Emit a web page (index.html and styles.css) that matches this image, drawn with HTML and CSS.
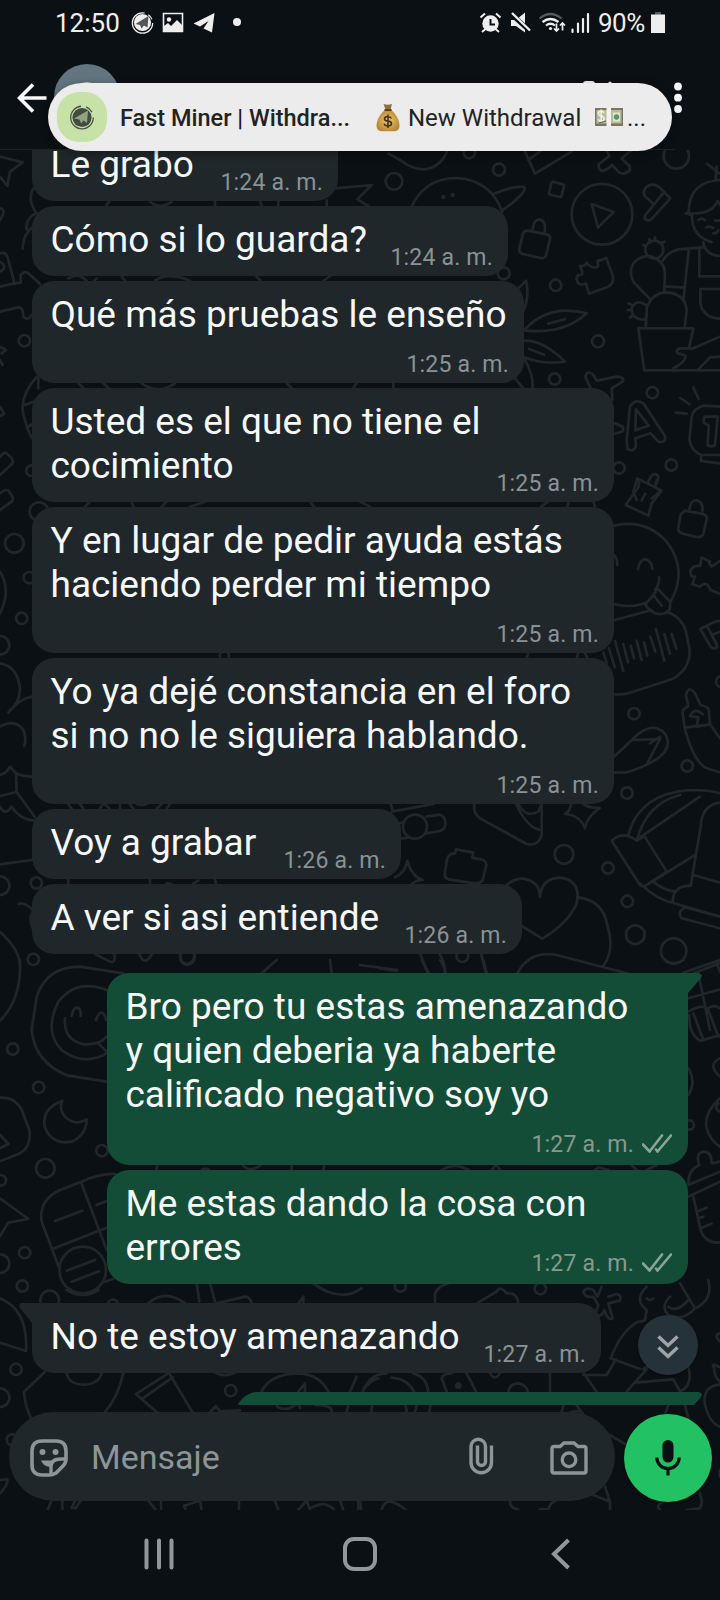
FILE: index.html
```html
<!DOCTYPE html>
<html lang="es">
<head>
<meta charset="utf-8">
<title>Chat</title>
<link rel="stylesheet" href="styles.css">
</head>
<body>
<div class="phone">
  <header class="top">
    <div class="status">
      <span class="clock">12:50</span>
      <svg class="st-left" width="112" height="24" viewBox="0 0 112 24">
        <circle cx="11.500" cy="12" r="10.200" fill="none" stroke="#eee" stroke-width="1.200" stroke-dasharray="50 4 6 4"/>
        <circle cx="11.500" cy="11.500" r="8.600" fill="#eee"/>
        <path d="M4.500 13 17.500 5 16.500 16.500 13 14.500 10.500 17.500 9 14Z" fill="#555"/>
        <path d="M32.500 2.500h19v18h-19Z" fill="none" stroke="#eee" stroke-width="1.600"/>
        <circle cx="38" cy="8.500" r="2.200" fill="#eee"/>
        <path d="M33 20v-5l4-3 3 3 6-6 6 6v5Z" fill="#eee"/>
        <path d="M62.500 12.500 83.500 2 81 21.500 72.500 17.500 77.500 10 69 15.500Z" fill="#eee"/>
        <circle cx="106" cy="11" r="4" fill="#eee"/>
      </svg>
      <svg class="st-right" width="112" height="24" viewBox="0 0 112 24">
        <circle cx="11.500" cy="12.500" r="8.200" fill="#eee"/>
        <path d="M11.500 8v5.500h4.500" fill="none" stroke="#0b1014" stroke-width="2"/>
        <path d="M1.500 6.500 6 2.500M17 2.500l4.500 4M3 21l3.500-3M20 21l-3.500-3" stroke="#eee" stroke-width="2"/>
        <path d="M32 9h5l9-7.500v20L37 15h-5Z" fill="#eee"/>
        <path d="M31 2 52 21" stroke="#0b1014" stroke-width="5"/><path d="M33 2 51 19.500" stroke="#eee" stroke-width="2.400"/>
        <path d="M60.500 7.500q11-9 22 0" fill="none" stroke="#555a5e" stroke-width="2.200"/>
        <path d="M63.500 11q8-6 16 0M67 14.500q4.500-3.500 9 0" fill="none" stroke="#eee" stroke-width="2.200"/>
        <circle cx="71.500" cy="17.500" r="1.600" fill="#eee"/>
        <path d="M77.500 12.500v7M75 17.500l2.500 2.500 2.500-2.500M83.500 19.500v-7M81 14.500l2.500-2.500 2.500 2.500" fill="none" stroke="#eee" stroke-width="1.700"/>
        <path d="M93.500 18.500v2.500M99 12.500V21M104 8v13M109 3v18" stroke="#eee" stroke-width="2.200" stroke-linecap="round"/>
      </svg>
      <span class="battery-text">90%</span>
      <svg class="battery" width="14" height="22" viewBox="0 0 14 22"><path d="M4 0h6v3H4Z" fill="#55595c"/><path d="M0 2.500h14V21H0Z" fill="#eee"/></svg>
    </div>
    <div class="appbar">
      <svg class="back" width="30" height="30" viewBox="0 0 30 30"><path d="M29.500 15H3M16 1.500 2.500 15 16 28.500" fill="none" stroke="#f7f8fa" stroke-width="3.600"/></svg>
      <svg class="avatar" width="66" height="66" viewBox="0 0 66 66"><circle cx="33" cy="33" r="33" fill="#63757f"/><circle cx="33" cy="28" r="10" fill="#cfd6da"/></svg>
      <svg class="call" width="32" height="32" viewBox="0 0 32 32"><path d="M0 3q0-3 3-3h6q3 0 3 3v8H0ZM25 6V2q2-3 4 0v4Z" fill="#f7f8fa"/></svg>
      <svg class="more" width="8" height="32" viewBox="0 0 8 32"><g fill="#f7f8fa"><circle cx="4" cy="4.500" r="3.900"/><circle cx="4" cy="15.700" r="3.900"/><circle cx="4" cy="27" r="3.900"/></g></svg>
    </div>
    <div class="divider"></div>
  </header>

  <div class="notice">
    <svg class="notice-icon" width="50" height="50" viewBox="0 0 50 50">
      <rect width="50" height="50" rx="22" fill="#c6e2a7"/>
      <circle cx="25" cy="25.500" r="11.300" fill="none" stroke="#4b5148" stroke-width="1.300" stroke-dasharray="52 5 8 6"/>
      <circle cx="25" cy="25.500" r="9.600" fill="#444a44"/>
      <path d="M17 26.500 31 18.500 30 31 26.500 28.500 24 31.500 22.500 27.500Z" fill="#8fa67c"/>
    </svg>
    <span class="notice-title">Fast Miner | Withdra...</span>
    <svg class="bag" width="24" height="29" viewBox="0 0 24 29">
      <defs><radialGradient id="gold"><stop offset="0" stop-color="#efc975"/><stop offset="1" stop-color="#b98b34"/></radialGradient></defs>
      <path d="M9 7C4 11 .5 17 .5 23q0 5 5 5.300h13q5-.3 5-5.300C23.500 17 20 11 15 7Z" fill="url(#gold)"/>
      <path d="M7.500 1q4 1.500 8.500 0l-1.500 5.500h-5Z" fill="#8f6f35"/><path d="M8.500 7h7" stroke="#5e4217" stroke-width="2"/>
      <path d="M15.300 15.500q-.8-2-3.500-2-3.300 0-3.300 2.300 0 2 3.300 2.300 3.700.3 3.700 2.500 0 2.400-3.600 2.400-3.200 0-3.700-2.300M12 11.500v13.500" fill="none" stroke="#44331a" stroke-width="1.600"/>
    </svg>
    <span class="notice-text">New Withdrawal</span>
    <svg class="bill" width="28" height="18" viewBox="0 0 28 18">
      <path d="M0 0h28v18H0Z" fill="#77785f"/><path d="M1.500 2h25v13.500h-25Z" fill="#b9bb9d"/>
      <path d="M9 4.800q-1-1.700-3-1.700-2.700 0-2.700 2.400 0 1.800 2.800 2.500 3 .6 3 2.800 0 2.400-3 2.400-2.200 0-3-2M6.200 1.500v13.500" fill="none" stroke="#f0f0e4" stroke-width="1.600"/>
      <path d="M4 15l7-2" stroke="#5c5d48"/><path d="M11.500 0h4.500v18h-4.500Z" fill="#f2f2ee"/>
      <path d="M18 4.500h7v9h-7Z" fill="#e3e5cf"/><circle cx="21.500" cy="9" r="2.700" fill="#4f9a68"/>
    </svg>
    <span class="notice-dots">...</span>
  </div>

  <main class="conversation">
    <svg class="wallpaper" width="720" height="1360" viewBox="0 150 720 1360">
      <g transform="translate(400 140) scale(.33333)">
        <path d="M0 60Q40 90 75 88 125 80 142 30M375 35 405 101 515 35M385 60 420 35M620 30 628 48 597 72Q592 85 605 93 620 92 636 75L658 98Q675 106 690 90L688 78 665 55 695 30"/>
        <circle cx="208" cy="38" r="17"/><circle cx="297" cy="89" r="18"/><circle cx="-18" cy="124" r="25"/><circle cx="829" cy="48" r="38"/>
        <path d="M30 210Q70 115 168 114 270 118 307 215M280 162Q350 135 372 141 385 155 306 212"/>
        <g class="dot"><circle cx="130" cy="171" r="7"/><circle cx="158" cy="165" r="7"/></g>
        <rect x="450" y="129" width="39" height="39" rx="6" transform="rotate(14 470 149)"/>
        <circle cx="606" cy="223" r="91"/><path d="M575 192 641 216 594 263Z"/>
        <path d="M757 189 745 178Q720 160 740 140 760 125 782 145L811 175 754 238Q742 245 734 235V228L789 160"/>
        <path d="M383 272 440 283Q452 287 450 297L438 346Q434 357 422 354L368 342Q356 337 358 325L369 281Q373 271 383 272M398 273Q400 236 420 239 441 244 433 281"/>
        <path d="M540 378Q556 380 560 368 572 385 590 382 598 378 592 364L619 354 639 410Q642 430 625 440L567 461 558 430Q548 437 535 430 525 415 535 405 550 405 547 395Z"/>
        <circle cx="311" cy="400" r="18"/><circle cx="467" cy="436" r="17"/><circle cx="594" cy="604" r="18"/><circle cx="464" cy="717" r="17"/><circle cx="757" cy="758" r="17"/><circle cx="814" cy="975" r="17"/><circle cx="657" cy="984" r="17"/>
        <path d="M355 445Q375 425 378 422 390 470 368 520M372 571Q445 490 560 520 490 585 372 571M445 551l50-13M372 602Q430 600 495 665 430 675 372 652M387 627l45 17M372 655Q400 700 398 744M345 715l25 30"/>
        <path d="M960 120Q865 125 866 220 935 225 953 183L960 195M858 220l18 6Q875 290 935 306M895 240q10-8 20 0M945 242h15M918 262q10-5 22 2M955 270q-2 10-15 10M922 72l35 28M950 80l-3 40M910 306q5 40 50 42M908 322 835 328Q805 335 788 362M866 330 850 482M793 439l62 4M898 322v87h62M960 447H901v40q5 45 59 49"/>
        <circle cx="763" cy="329" r="27"/><path d="M750 308l-2-10M765 300v-8M780 310l13-5M738 319l-8-4M737 562 741 500Q760 457 800 457 855 460 860 510L854 562M748 475 700 425Q685 395 700 370 725 343 755 350 795 365 795 400L793 456"/>
        <path d="M738 495q-30-20-43 10 0 35 40 34M695 495l-10-5M695 510h-12M700 525l-10 8M715 565H880L868 620M715 565 733 691H960M960 590 880 625H845Q825 627 833 640L857 647Q855 670 820 684M960 650 930 652 895 688"/>
        <path d="M572 745 556 710Q560 690 578 702L590 722 650 710Q675 710 668 725L635 745 637 780M645 850 668 860Q675 872 660 877L640 882"/>
        <path d="M690 800Q705 775 730 790L795 888Q798 910 775 905L752 880 706 895 708 920Q698 938 682 926L680 900ZM708 808 746 857 706 871Z"/>
        <path d="M827 818l33 3M841 774l28 19M880 743l16 34M960 800 912 797Q880 805 875 830L868 900Q875 935 905 945L960 945M903 945v18l57 7M913 830h40l-8 85q-8 8-22 0l3-58-15-10Z"/>
        <path d="M710 1080 700 1055 712 1015 785 1052 755 1075M745 1025q12-30 28-20 5 10-8 35"/>
      </g>
      <g transform="translate(480 480) scale(.33333)">
        <path d="M478 0 475 22 437 75 505 107 515 70 543 35 525 20 530 0M485 62l10-20M183 80l35-25M262 80l5-15M340 65l5 15"/>
        <path d="M614 92 670 102Q682 107 680 117L670 162Q664 174 650 171L605 160Q594 155 595 145L602 103ZM627 94Q632 58 650 61 675 70 665 102"/>
        <path d="M402 137Q495 115 560 185 625 270 572 365M495 370Q450 385 402 372M402 225q10 10 10 30M474 268Q480 235 498 238 515 245 517 266M537 292Q540 310 525 330M495 372Q520 350 532 325L570 365Q575 400 545 402 515 405 495 372M520 345l25 32"/>
        <path d="M402 421 515 390M560 395Q605 410 618 455L629 510Q630 570 575 598L445 640Q425 645 402 643"/>
        <path d="M370 518l10 30M387 505l17 57M405 483l25 90M430 492l14 55M452 497l10 38M470 482l15 58M492 487l10 40M511 470l15 45M528 447l25 95M553 462l17 60M575 462l14 44"/>
        <path d="M720 243 695 260Q680 240 690 245L665 232 660 258Q640 255 632 270 630 295 645 290L637 313 660 320Q680 300 692 330L720 342M720 422 705 425 661 447 692 500Q705 512 712 500L695 465 720 455M680 437l30 55"/>
        <circle cx="462" cy="701" r="17"/><circle cx="622" cy="858" r="17"/><circle cx="441" cy="939" r="17"/><circle cx="725" cy="605" r="17"/>
        <path d="M614 743 608 700Q605 690 625 678L618 645Q625 615 645 640L662 675Q690 680 687 700L690 733 650 740 655 712 630 708Q645 680 668 703M614 743 690 733 720 775M614 743Q640 845 680 865L720 877"/>
        <path d="M402 830 455 780Q500 735 530 745 570 760 562 800 545 845 440 877L402 878M458 780 540 777 502 850M540 770l-30 20"/>
        <path d="M140 535l5-18M290 535l5-18M315 520l7 12"/>
      </g>
      <g transform="translate(380 800) scale(.33333)">
        <path d="M285 5Q275 35 300 55L440 132Q475 140 485 105V5M405 5Q440 85 485 91M415 10Q435 55 475 35L485 10M35 35 160 12M30 5l8 25M60 70l10-3M62 116l22-3M138 50 180 44Q195 48 196 70 195 88 180 93L140 100"/>
        <circle cx="105" cy="80" r="36"/>
        <path d="M575 5Q570 35 555 42 600 45 615 85 620 50 660 24 620 25 607 8M82 182Q75 220 45 232M82 182Q95 230 128 240 110 240 95 252"/>
        <path d="M225 160 228 148 280 158 277 173 310 180Q322 188 318 200L308 240Q300 252 285 250L205 238Q192 235 195 215L202 175Q208 160 225 160"/>
        <circle cx="552" cy="163" r="28"/><circle cx="684" cy="204" r="17"/><circle cx="742" cy="304" r="17"/><circle cx="766" cy="404" r="28"/><circle cx="881" cy="453" r="38"/><circle cx="247" cy="468" r="18"/>
        <path d="M375 260Q400 235 430 236 480 245 480 290 485 235 540 233 605 240 590 310 565 370 487 416L425 378M593 292Q670 300 683 380 705 450 670 498M413 518Q450 450 530 465L760 525M120 460l23 60M178 460q18 30 18 60M303 460l15 60M0 505l50 8"/>
        <path d="M745 103Q780 -20 930 -30 990 -30 1020 -20M770 122Q800 10 900 -15M780 112 960 -10M695 122Q730 90 770 122L793 108 860 215 792 260 780 255ZM780 250Q830 300 890 312L1020 350M792 260 945 165M820 245Q850 270 885 275M1020 8Q965 15 962 80L932 258Q880 255 878 305M940 225 1020 248M1020 350 915 322Q890 335 905 355L1020 385M910 518l110-38M1010 490l10 25"/>
      </g>
      <g transform="translate(0 960) scale(.33333)">
        <path d="M60 0Q65 120 0 182M320 365 205 347Q105 310 95 210L110 110Q140 20 240 20L370 40M320 90Q230 55 175 125 130 215 185 270 250 320 320 280M195 175Q190 240 250 253 300 255 320 230M215 168q5-28 17-25 12 2 10 25M288 180q8-25 18-22 10 5 12 22M295 250l30 30M785 40 830 0M990 0l5 38"/>
        <circle cx="100" cy="-2" r="17"/><circle cx="562" cy="-8" r="22"/><circle cx="38" cy="267" r="17"/><circle cx="116" cy="382" r="17"/><circle cx="306" cy="572" r="17"/><circle cx="136" cy="625" r="28"/><circle cx="2" cy="661" r="16"/><circle cx="74" cy="878" r="17"/><circle cx="0" cy="911" r="28"/><circle cx="67" cy="978" r="17"/>
        <path d="M187 422Q125 445 134 500 155 555 215 545 260 525 260 478 225 500 195 470 175 445 187 422M0 413Q45 410 65 450L88 510Q95 560 60 580L0 604M0 525 25 552 0 565M0 715 85 777 25 788 0 828"/>
        <path d="M345 642Q300 640 245 665L180 690Q115 720 125 785L178 925M165 783l82-31M245 672 320 870M155 868 320 803M290 735l30-12M315 965l25-8"/><circle cx="248" cy="930" r="70"/><path d="M200 932l85-32M215 965l82-31"/>
        <path d="M468 630l5-15M728 615q20 25 55 0M875 630v-15M970 630l3-15M605 630q12-8 22 0M590 970l8 55M630 970l15 55M940 970q80 60 145 15"/>
      </g>
      <g transform="translate(360 960) scale(.33333)">
        <path d="M0 15 112 30M185 0l22 40M240 0q15 20 15 40M370 0l10 40M915 0q25 20 55 0M1000 40 1080 10M1015 40l35 170M985 115 1080 88M985 155Q1030 130 1040 148 1060 130 1080 145M1000 160l30 80M1045 150l30 80M988 165Q985 220 1020 243L1080 225M985 325q25 40 0 80M1080 295q-40 20 0 55M1080 415Q1030 460 1040 505 1050 540 1080 560M1075 430q-15 15 5 25M985 670Q985 630 1018 615 1005 580 1030 575 1055 575 1055 610L1080 605M985 675 1080 635M985 710 1080 665M1000 710 1022 810Q1035 850 1080 848M1010 755l30-12M1015 775l15-5M1025 803l30-12M245 630q40-25 80 0M395 630l13-15 13 15M705 630l10-8 30 8M830 630l-15-15M860 630l30-15"/>
        <circle cx="988" cy="495" r="14"/><circle cx="121" cy="978" r="17"/><circle cx="541" cy="986" r="17"/>
      </g>
      <g transform="translate(0 1290) scale(.33333)">
        <circle cx="149" cy="30" r="28"/><circle cx="339" cy="45" r="16"/><circle cx="48" cy="238" r="17"/><circle cx="0" cy="323" r="28"/><circle cx="692" cy="302" r="17"/><circle cx="36" cy="449" r="16"/>
        <path d="M0 25Q85 60 78 183L0 158M200 0q45 30 95 0M445 40q50-45 110 0M650 40l85-20q15 0 20 20M895 40l15-20v20M135 245 72 305Q75 350 95 390M200 248Q205 285 255 284 300 280 305 248M370 248Q355 320 315 366M505 250 408 312 470 366M518 262 428 325M508 250 577 366M645 248q25 15 60 0M785 305Q810 250 900 250 960 255 985 305M895 305l20-25v25M1050 305l20-45M630 366l18-18 12 16 60-3M830 345q5 15 40 10 30-25 30 0M945 345q55 0 50 22M1040 366l5-20M0 570 22 567Q25 585 0 610M143 660l12-30M187 632v28M225 632l-10 22 12 0 15-22M445 632l23 28M483 632v28M605 660l-5-28-48 15 5 13M717 632v28M825 632l10 28M895 660 920 632 930 660M930 655q40-20 55-8 15 5 17 13M1020 632l10 28M1075 632v28"/>
      </g>
      <g transform="translate(360 1290) scale(.33333)">
        <path d="M225 40V10Q240-20 290-25M350 40 410 5Q420-15 440 10 470 5 475 40M670 5Q680-10 700 0L712 20 725-10M670 5Q675 25 700 20L715 45 705 75Q725 85 733 60 745 95 758 85L745 40 780 32Q785 15 770 12L745 20M860 -10Q820 30 860 60L855 90 840 95M860 25q10 10 20 0M1045 -30Q1060 30 1005 55L960 -20M1005 55Q970 95 925 75 900 50 930 20M925 50q25 20 60-20M835 95Q785 120 752 205L840 237M768 208 740 255H670M670 248 710 305M880 215 800 305M825 278 940 268 960 305M985 230Q1000 285 960 305M940 268l20 35M850 237l30-22M570 248v57M1080 232q-30-15-18 0 0 30 18 43M1080 283Q1025 290 1035 345 1050 400 1080 410M1080 130q-20 5 0 25M0 330Q20 250 80 250M160 250Q200 260 205 305M95 263Q140 265 162 305M10 300Q30 270 55 265M245 265Q250 250 275 250M245 265 260 305M320 250l28 55M390 250q15 25 30 0M445 305q5-25 30-25 25 5 28 25M35 366Q30 320 90 315 140 325 140 366M165 366l5-20M208 366l3-20M605 366l5-20M650 346 690 400 795 462M925 346l-15 40M975 346l10 40M1080 540v20M630 366l30-3M735 590l15 45M700 615 750 635 750 660M1020 610Q1030 640 1020 655L980 660M900 660q-15-15 10-25M450 635Q450 655 475 658M65 660Q70 635 90 634 115 640 138 660M0 632l3 28M540 658h25q5-20 25-28"/>
        <g class="dot"><circle cx="295" cy="287" r="10"/></g>
      </g>
      <g transform="translate(0 140) scale(.33333)">
        <path d="M0 50 68 67 30 95 22 138 0 110M0 205q15 0 8 20L0 240M0 340q15-5 22 10L43 428M0 365q25 15 0 30M0 440Q40 430 62 428V405Q75 390 85 400L120 432M0 515 55 502Q70 500 70 530 85 545 95 525M100 145Q80 180 110 220M110 218q-35 20-30 50M100 260q-30 20-32 65M0 620 18 630 5 640M0 660l8 15M0 800 12 822 0 828M110 710Q50 780 75 840 85 880 100 900M115 745V715M75 795 120 778M85 860 100 850M0 950Q15 930 25 945 40 955 38 970L0 1005M0 1060Q25 1040 30 1060 45 1070 35 1085L0 1110M320 195l10-15M450 185q30 25 65 0M645 180v20M780 180l5 20M835 180v20M980 180v18M1005 145 1115 135 1072 178 1105 198M205 415q30-20 55 8M290 415l-10 10M365 410l10 12M465 422Q500 395 570 422M765 405l15 15M995 405l-25 18M1165 40l35 20M235 730l15 14M310 730l15 14M425 730q50 35 100 0M860 730l15 14M1070 730l-10 14M1180 730v14M255 1100l15-15M395 1085l5 15M500 1085l-15 15M570 1100l45-15M930 1085l12 15M1080 1085l30 15"/>
        <circle cx="73" cy="602" r="17"/><circle cx="117" cy="1115" r="28"/><circle cx="95" cy="992" r="16"/>
      </g>
      <g transform="translate(0 500) scale(.33333)">
        <circle cx="43" cy="130" r="28"/><circle cx="88" cy="233" r="17"/><circle cx="65" cy="355" r="17"/><circle cx="0" cy="436" r="28"/><circle cx="0" cy="1157" r="28"/><circle cx="109" cy="1149" r="17"/><circle cx="673" cy="468" r="14"/>
        <path d="M0 215Q35 270 0 340M0 490Q55 500 60 570 58 610 25 637 60 595 96 590M0 680Q45 655 70 690 80 710 73 738M0 825Q20 820 30 800L48 820Q70 830 96 830M48 820 50 876M0 888 50 876 105 952M0 920q15 30 35 0Q60 960 105 962M0 1093 96 1080M55 1212Q75 1205 98 1230M98 1235Q85 1255 98 1285M0 1295Q60 1350 60 1400M285 1362 330 1385Q348 1390 343 1362M418 1362q15 40 38 0M540 1362q2 30 22 30 22-5 22-30M205 912l10 14M240 912l10 14M300 926q10-25 28 0M360 912v14M390 912l10 14M410 912q15 5 30 0M470 926l15-14M510 912l-10 14M205 1137v15M450 1137v15M500 1150l15 2M580 1150l15-8M645 1137l3 15"/>
      </g>
    </svg>

    <div class="messages">
      <div class="msg in h1 w306"><p>Le grabo</p><time>1:24 a. m.</time></div>
      <div class="msg in h1 w476"><p>Cómo si lo guarda?</p><time>1:24 a. m.</time></div>
      <div class="msg in h2 w492"><p>Qué más pruebas le enseño</p><time>1:25 a. m.</time></div>
      <div class="msg in h3 w582"><p>Usted es el que no tiene el<br>cocimiento</p><time>1:25 a. m.</time></div>
      <div class="msg in h4 w582"><p>Y en lugar de pedir ayuda estás<br>haciendo perder mi tiempo</p><time>1:25 a. m.</time></div>
      <div class="msg in h4 w582"><p>Yo ya dejé constancia en el foro<br>si no no le siguiera hablando.</p><time>1:25 a. m.</time></div>
      <div class="msg in h1 w369"><p>Voy a grabar</p><time>1:26 a. m.</time></div>
      <div class="msg in h1 w490"><p>A ver si asi entiende</p><time>1:26 a. m.</time></div>
      <div class="msg out tail h5 first"><p>Bro pero tu estas amenazando<br>y quien deberia ya haberte<br>calificado negativo soy yo</p>
        <div class="meta"><time>1:27 a. m.</time><svg class="ticks" width="30" height="19" viewBox="0 0 30 19"><path d="M1 10.500 7.500 17.500 20 1.500M14 15.500 15.500 17.500 29 1.500" /></svg></div></div>
      <div class="msg out h3"><p>Me estas dando la cosa con<br>errores</p>
        <div class="meta"><time>1:27 a. m.</time><svg class="ticks" width="30" height="19" viewBox="0 0 30 19"><path d="M1 10.500 7.500 17.500 20 1.500M14 15.500 15.500 17.500 29 1.500" /></svg></div></div>
      <div class="msg in tail h1 w569 first"><p>No te estoy amenazando</p><time>1:27 a. m.</time></div>
      <div class="msg out tail next first"></div>
    </div>

    <button class="jump" aria-label="Ir al final"><svg width="22" height="26" viewBox="0 0 22 26"><path d="M1.500 2.500 11 11.500 20.500 2.500M1.500 13.500 11 22.500 20.500 13.500" fill="none" stroke="#9ea5a9" stroke-width="3.400"/></svg></button>

    <div class="composer">
      <div class="field">
        <svg class="sticker" width="38" height="38" viewBox="0 0 38 38"><path d="M12 2H26Q36 2 36 12V20Q36 24 33 27L26 34Q23 36 19 36H12Q2 36 2 26V12Q2 2 12 2Z" fill="none" stroke="#8d9598" stroke-width="3.600"/><circle cx="12.500" cy="13" r="3" fill="#8d9598"/><circle cx="25.500" cy="13" r="3" fill="#8d9598"/><path d="M11 21.500h14l-4 6q-7 1-10-6Z" fill="#8d9598"/><path d="M36 20H31Q21 20 21 28V36" fill="none" stroke="#8d9598" stroke-width="3.400"/></svg>
        <span class="placeholder">Mensaje</span>
        <svg class="clip" width="25" height="38" viewBox="0 0 25 38"><path d="M22.500 8.500V25.500A10.200 10.200 0 0 1 2 25.500V9.500A7.200 7.200 0 0 1 16.500 9.500V24.500A4 4 0 0 1 8.500 24.500V8.500" fill="none" stroke="#8d9598" stroke-width="3.400"/></svg>
        <svg class="camera" width="38" height="34" viewBox="0 0 38 34"><path d="M4 5.500H10L14 2H24L28 5.500H34Q36 5.500 36 7.500V30Q36 32 34 32H4Q2 32 2 30V7.500Q2 5.500 4 5.500Z" fill="none" stroke="#8d9598" stroke-width="3.400"/><circle cx="19" cy="18.800" r="6.800" fill="none" stroke="#8d9598" stroke-width="3.400"/></svg>
      </div>
      <div class="mic"><svg width="26" height="37" viewBox="0 0 26 37"><rect x="7.500" y="1" width="11" height="22.500" rx="5.500" fill="#0b1014"/><path d="M1.800 18.500A11.200 11.200 0 0 0 24.200 18.500M13 29v7.500" fill="none" stroke="#0b1014" stroke-width="3.200"/></svg></div>
    </div>
  </main>

  <nav class="sysnav">
    <svg width="30" height="32" viewBox="0 0 30 32"><path d="M2.500 2.500v27M15 2.500v27M27.500 2.500v27"/></svg>
    <svg width="34" height="34" viewBox="0 0 34 34"><rect x="2" y="2" width="30" height="30" rx="9"/></svg>
    <svg width="20" height="32" viewBox="0 0 20 32"><path d="M17.500 2 3 16 17.500 30"/></svg>
  </nav>
</div>
</body>
</html>
```
FILE: styles.css
```css
* { box-sizing: border-box; }
body { margin: 0; background: #0b1014; font-family: Roboto, sans-serif; }
.phone { position: relative; width: 720px; height: 1600px; display: flex; flex-direction: column; overflow: hidden; background: #0b1014; }
.top { height: 150px; display: flex; flex-direction: column; flex: none; }
.status { height: 46px; padding-left: 55px; display: flex; align-items: center; color: #eee; font-size: 26px; }
.status span { line-height: 46px; white-space: nowrap; }
.clock { width: 76px; }
.st-left { flex: none; margin-right: 236px; }
.st-right { flex: none; }
.battery-text { width: 60px; padding-left: 7px; letter-spacing: -.5px; flex: none; }
.battery { flex: none; }
.appbar { height: 103px; padding-left: 17px; display: flex; align-items: center; }
.appbar svg { flex: none; }
.avatar { margin: -1px 0 0 7px; }
.call { margin: -2px 0 0 463px; }
.more { margin-left: 59px; }
.divider { width: 675px; height: 1px; background: #1d2428; }

.notice { position: absolute; z-index: 3; left: 48px; top: 83px; width: 624px; height: 68px; padding-left: 9px; border-radius: 34px; background: #ececec; box-shadow: 0 2px 10px rgba(0, 0, 0, .35); display: flex; align-items: center; color: #222; font-size: 24px; white-space: nowrap; }
.notice svg { flex: none; }
.notice span { padding-top: 1px; }
.notice .notice-title { width: 256px; padding-left: 13px; font-weight: 500; font-size: 23.500px; flex: none; }
.bag { margin-left: 13px; }
.notice .notice-text { width: 194px; padding-left: 8px; flex: none; }
.bill { margin-left: 1px; }
.notice .notice-dots { padding-left: 4px; }

.conversation { position: relative; height: 1360px; flex: none; display: flex; flex-direction: column; }
.wallpaper { position: absolute; left: 0; top: 0; }
.wallpaper g { fill: none; stroke: #20272b; stroke-width: 8; stroke-linecap: round; stroke-linejoin: round; }
.wallpaper .dot { fill: #20272b; stroke: none; }
.messages { position: relative; height: 1255px; overflow: hidden; display: flex; flex-direction: column; gap: 5px; padding: 0 32px; flex: none; }
.messages::before { content: ""; height: 0; margin-bottom: -24px; flex: none; }
.msg { position: relative; flex: none; display: grid; grid-template-columns: minmax(0, 1fr); border-radius: 22px; padding: 12px 15px 6px 18.500px; color: #f7f8fa; }
.msg > * { grid-area: 1 / 1; }
.msg p { margin: 0; font-size: 37px; line-height: 43.800px; white-space: nowrap; }
.msg time { align-self: end; justify-self: end; font-size: 23px; line-height: 24px; color: #8b9296; letter-spacing: .2px; white-space: nowrap; }
.in { align-self: flex-start; background: #1f272a; }
.out { align-self: flex-end; width: 581px; background: #144d37; }
.h1 { height: 70px; }
.h2 { height: 102px; }
.h3 { height: 114px; }
.h4 { height: 146px; }
.h5 { height: 192px; }
.w306 { width: 306px; }
.w369 { width: 369px; }
.w476 { width: 476px; }
.w490 { width: 490px; }
.w492 { width: 492px; }
.w582 { width: 582px; }
.w569 { width: 569px; }
.first { margin-top: 14px; }
.meta { align-self: end; justify-self: end; display: flex; align-items: center; gap: 8px; padding: 0 1px 2px 0; }
.out time { color: #87998f; }
.ticks { fill: none; stroke: #8aa598; stroke-width: 2.600; stroke-linecap: round; margin-top: -4px; }
.in.tail { border-top-left-radius: 0; }
.out.tail { border-top-right-radius: 0; }
.tail::before { content: ""; position: absolute; top: 0; width: 15px; height: 22px; }
.in.tail::before { left: -13px; background: #1f272a; clip-path: polygon(0 2px, 2px 0, 100% 0, 100% 100%, 13px 20px, 1px 5px); }
.out.tail::before { right: -14px; background: #144d37; clip-path: polygon(0 0, 12px 0, 15px 2px, 14px 5px, 1px 20px, 0 100%); }
.next { width: 452px; height: 60px; }

.jump { position: absolute; left: 638px; top: 1165px; width: 60px; height: 60px; margin-left: -.5px; padding: 4px 0 0; border: 0; border-radius: 50%; background: #26323a; display: flex; align-items: center; justify-content: center; box-shadow: 0 1px 3px rgba(0, 0, 0, .5); }
.composer { position: relative; height: 105px; padding: 7px 0 0 9px; display: flex; align-items: flex-start; }
.field { width: 606px; height: 89px; border-radius: 45px; background: #1f272a; padding-left: 21px; display: flex; align-items: center; }
.field svg { flex: none; }
.sticker { margin-top: 2px; }
.placeholder { width: 376px; padding-left: 23px; font-size: 34px; color: #8d9598; flex: none; }
.clip { margin-left: 25px; margin-top: -1px; }
.camera { margin-left: 56px; margin-top: 2px; }
.mic { width: 88px; height: 88px; margin: 2px 0 0 9px; border-radius: 50%; background: #22c163; display: flex; align-items: center; justify-content: center; box-shadow: 0 1px 3px rgba(0, 0, 0, .5); }
.mic svg { margin-top: -2px; }
.sysnav { height: 88px; flex: none; display: flex; align-items: center; padding-left: 143.500px; }
.sysnav svg { fill: none; stroke: #92979a; stroke-width: 4; stroke-linecap: round; }
.sysnav svg:nth-child(2) { margin-left: 169px; }
.sysnav svg:nth-child(3) { margin-left: 174px; stroke-linecap: butt; }
```
